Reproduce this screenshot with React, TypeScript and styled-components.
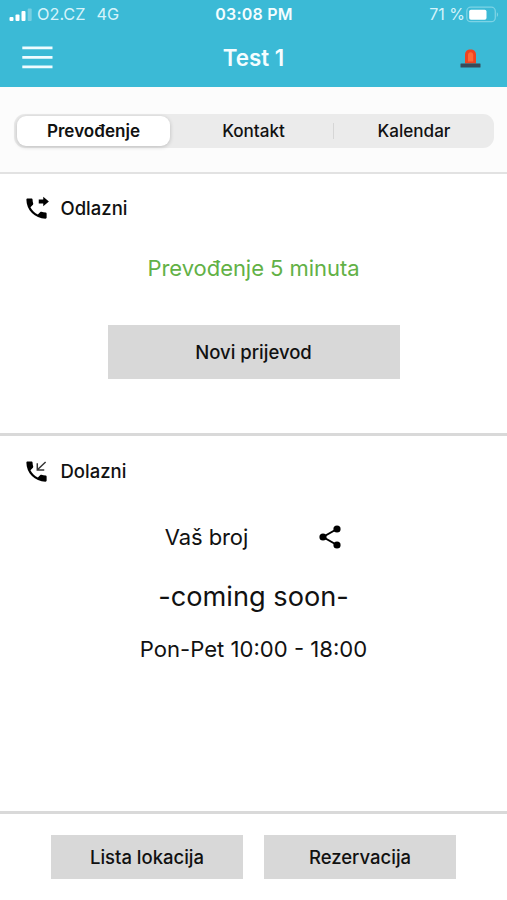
import React from "react";
import styled, { createGlobalStyle } from "styled-components";

const Global = createGlobalStyle`
  * { box-sizing: border-box; }
  html, body { margin: 0; background: #fff; }
  body { font-family: Inter, "Liberation Sans", sans-serif; color: #111; }
  button { font-family: inherit; color: inherit; border: 0; padding: 0; cursor: pointer; }
  svg { display: block; flex: none; }
`;

const Screen = styled.div`
  width: 507px;
  height: 900px;
  display: flex;
  flex-direction: column;
  overflow: hidden;
  background: #fff;
`;

const Header = styled.header`
  height: 87px;
  flex: none;
  background: #3bbad6;
  color: #f4fdff;
`;

const StatusBar = styled.div`
  height: 30px;
  display: grid;
  grid-template-columns: 1fr auto 1fr;
  align-items: center;
  padding: 0 8px 0 9px;
`;

const StatusGroup = styled.div<{ $end?: boolean }>`
  display: flex;
  align-items: center;
  justify-content: ${(p) => (p.$end ? "flex-end" : "flex-start")};
`;

const Label = styled.span<{
  $size: number;
  $weight?: number;
  $spacing?: number;
  $color?: string;
}>`
  font-size: ${(p) => p.$size}px;
  font-weight: ${(p) => p.$weight ?? 400};
  letter-spacing: ${(p) => p.$spacing ?? 0}px;
  color: ${(p) => p.$color ?? "inherit"};
  line-height: 1.2;
  white-space: nowrap;
`;

const Carrier = styled(Label)`
  margin: 0 11px 0 5px;
`;

const NavBar = styled.div`
  height: 56px;
  display: grid;
  grid-template-columns: 1fr auto 1fr;
  align-items: center;
  padding: 0 26px 0 22px;
`;

const NavTitle = styled(Label)`
  padding-left: 4px;
`;

const IconButton = styled.button<{ $end?: boolean }>`
  background: none;
  justify-self: ${(p) => (p.$end ? "end" : "start")};
`;

const TabStrip = styled.nav`
  height: 87px;
  flex: none;
  display: flex;
  align-items: center;
  padding: 0 13px 0 14px;
  background: #fcfcfc;
  border-bottom: 2px solid #e2e2e2;
`;

const Segments = styled.div`
  flex: 1;
  height: 34px;
  margin-top: 3px;
  display: grid;
  grid-template-columns: 154px 1fr 161px;
  align-items: center;
  padding: 2px 0 2px 2px;
  border-radius: 11px;
  background: #ebebeb;
`;

const Segment = styled.button<{ $active?: boolean; $divided?: boolean }>`
  height: ${(p) => (p.$divided ? 16 : 30)}px;
  margin-left: ${(p) => (p.$active ? 1 : 0)}px;
  display: flex;
  align-items: center;
  justify-content: center;
  border-radius: ${(p) => (p.$divided ? 0 : 9)}px;
  background: ${(p) => (p.$active ? "#fff" : "transparent")};
  box-shadow: ${(p) => (p.$active ? "0 1px 4px rgba(0, 0, 0, 0.2)" : "none")};
  border-left: ${(p) => (p.$divided ? "1px solid #d6d6d6" : "0")};
`;

const MiddleSegment = styled(Segment)`
  padding-left: 4px;
`;

const Panel = styled.section<{ $height: number }>`
  height: ${(p) => p.$height}px;
  flex: none;
  display: flex;
  flex-direction: column;
  align-items: center;
  border-bottom: 3px solid #d9d9d9;
`;

const PanelTitle = styled.div<{ $height: number }>`
  align-self: stretch;
  height: ${(p) => p.$height}px;
  display: flex;
  align-items: center;
  gap: 11px;
  padding-left: 22.5px;
`;

const Line = styled.div<{ $height: number; $gap?: number }>`
  height: ${(p) => p.$height}px;
  display: flex;
  align-items: center;
  justify-content: center;
  gap: ${(p) => p.$gap ?? 0}px;
`;

const ActionButton = styled.button<{ $width: number; $height: number }>`
  width: ${(p) => p.$width}px;
  height: ${(p) => p.$height}px;
  display: flex;
  align-items: center;
  justify-content: center;
  background: #d8d8d8;
`;

const PrimaryAction = styled(ActionButton)`
  margin-top: 31px;
`;

const Footer = styled.footer`
  flex: 1;
  display: flex;
  justify-content: center;
  gap: 21px;
  padding-top: 21px;
`;

const handset =
  "M20 15.5c-1.25 0-2.45-.2-3.57-.57-.35-.11-.74-.03-1.02.24l-2.2 2.2c-2.83-1.44-5.15-3.75-6.59-6.59l2.2-2.21c.28-.26.36-.65.25-1C8.7 6.45 8.5 5.25 8.5 4c0-.55-.45-1-1-1H4c-.55 0-1 .45-1 1 0 9.39 7.61 17 17 17 .55 0 1-.45 1-1v-3.5c0-.55-.45-1-1-1z";

const SignalIcon = () => (
  <svg width="23" height="14" viewBox="0 0 23 14" fill="#fff">
    <rect x="0.5" y="9" width="4" height="4" rx="1" />
    <rect x="6.5" y="6.5" width="4" height="6.5" rx="1" />
    <rect x="12.5" y="3" width="4" height="10" rx="1" />
    <rect x="18.7" y="0.5" width="4" height="12.5" rx="1" opacity=".3" />
  </svg>
);

const BatteryIcon = () => (
  <svg width="34" height="18" viewBox="0 0 34 18">
    <rect x="1.8" y="1.2" width="28.5" height="14.5" rx="4" fill="none" stroke="#7dd3e5" strokeWidth="1.3" />
    <rect x="4.2" y="3.7" width="17.3" height="10" rx="1.8" fill="#fff" />
    <path d="M31.8 6.3c1.7.7 1.7 4 0 4.7z" fill="#7dd3e5" />
  </svg>
);

const MenuIcon = () => (
  <svg width="31" height="24" viewBox="0 0 31 24" stroke="#f0fcff" strokeWidth="2.6">
    <path d="M.3 1.9h30.2M.3 11.4h30.2M.3 20.9h30.2" />
  </svg>
);

const SirenIcon = () => (
  <svg width="21" height="20" viewBox="0 0 21 20">
    <path d="M5 15.4V7C5 3.3 7.2 1.5 10.5 1.5S16 3.3 16 7v8.4z" fill="#ef4320" />
    <path d="M8 13.5V7.3c0-2 .9-3 2.6-3s2.6 1 2.6 3v6.2z" fill="#ff6938" />
    <rect x=".5" y="15.4" width="20" height="4.2" rx=".5" fill="#374c5b" />
  </svg>
);

const OutgoingIcon = () => (
  <svg width="27" height="27" viewBox="0 0 24 24" fill="#000">
    <path d={handset} />
    <path d="M18 10.1l5-4.3-5-4.3v2.6h-4v3.4h4z" />
  </svg>
);

const IncomingIcon = () => (
  <svg width="27" height="27" viewBox="0 0 24 24" fill="#000">
    <path d={handset} />
    <path d="M20.1 3.5l-7.3 7M12.7 4.7v5.9h6.2" fill="none" stroke="#333" strokeWidth="1.3" />
  </svg>
);

const ShareIcon = () => (
  <svg width="23" height="24" viewBox="0 0 23 24">
    <path d="M18 4L4 12l14 8" fill="none" stroke="#000" strokeWidth="2" />
    <circle cx="18" cy="4" r="3.6" />
    <circle cx="4" cy="12" r="3.6" />
    <circle cx="18" cy="20" r="3.6" />
  </svg>
);

export default function App() {
  return (
    <Screen>
      <Global />
      <Header>
        <StatusBar>
          <StatusGroup>
            <SignalIcon />
            <Carrier $size={16.3} $color="#d5f3fa">O2.CZ</Carrier>
            <Label $size={16.3} $color="#d5f3fa">4G</Label>
          </StatusGroup>
          <Label $size={16} $weight={600} $spacing={0.2}>03:08 PM</Label>
          <StatusGroup $end>
            <Label $size={16} $color="#d5f3fa">71 %</Label>
            <BatteryIcon />
          </StatusGroup>
        </StatusBar>
        <NavBar>
          <IconButton aria-label="Menu"><MenuIcon /></IconButton>
          <NavTitle $size={22.3} $weight={600}>Test 1</NavTitle>
          <IconButton aria-label="SOS" $end><SirenIcon /></IconButton>
        </NavBar>
      </Header>

      <TabStrip>
        <Segments>
          <Segment $active><Label $size={17.1} $weight={600}>Prevođenje</Label></Segment>
          <MiddleSegment><Label $size={17.1} $weight={500}>Kontakt</Label></MiddleSegment>
          <Segment $divided><Label $size={17.1} $weight={500}>Kalendar</Label></Segment>
        </Segments>
      </TabStrip>

      <Panel $height={262}>
        <PanelTitle $height={69}>
          <OutgoingIcon />
          <Label $size={18.5} $weight={500}>Odlazni</Label>
        </PanelTitle>
        <Line $height={51}>
          <Label $size={22} $spacing={-0.05} $color="#62b146">Prevođenje 5 minuta</Label>
        </Line>
        <PrimaryAction $width={292} $height={54}>
          <Label $size={18.5} $weight={500}>Novi prijevod</Label>
        </PrimaryAction>
      </Panel>

      <Panel $height={378}>
        <PanelTitle $height={70}>
          <IncomingIcon />
          <Label $size={18.5} $weight={500}>Dolazni</Label>
        </PanelTitle>
        <Line $height={62} $gap={71}>
          <Label $size={22} $spacing={-0.1}>Vaš broj</Label>
          <ShareIcon />
        </Line>
        <Line $height={59}>
          <Label $size={27.2}>-coming soon-</Label>
        </Line>
        <Line $height={44}>
          <Label $size={22.1}>Pon-Pet 10:00 - 18:00</Label>
        </Line>
      </Panel>

      <Footer>
        <ActionButton $width={192} $height={44}>
          <Label $size={18.5} $weight={500}>Lista lokacija</Label>
        </ActionButton>
        <ActionButton $width={192} $height={44}>
          <Label $size={18.5} $weight={500}>Rezervacija</Label>
        </ActionButton>
      </Footer>
    </Screen>
  );
}
